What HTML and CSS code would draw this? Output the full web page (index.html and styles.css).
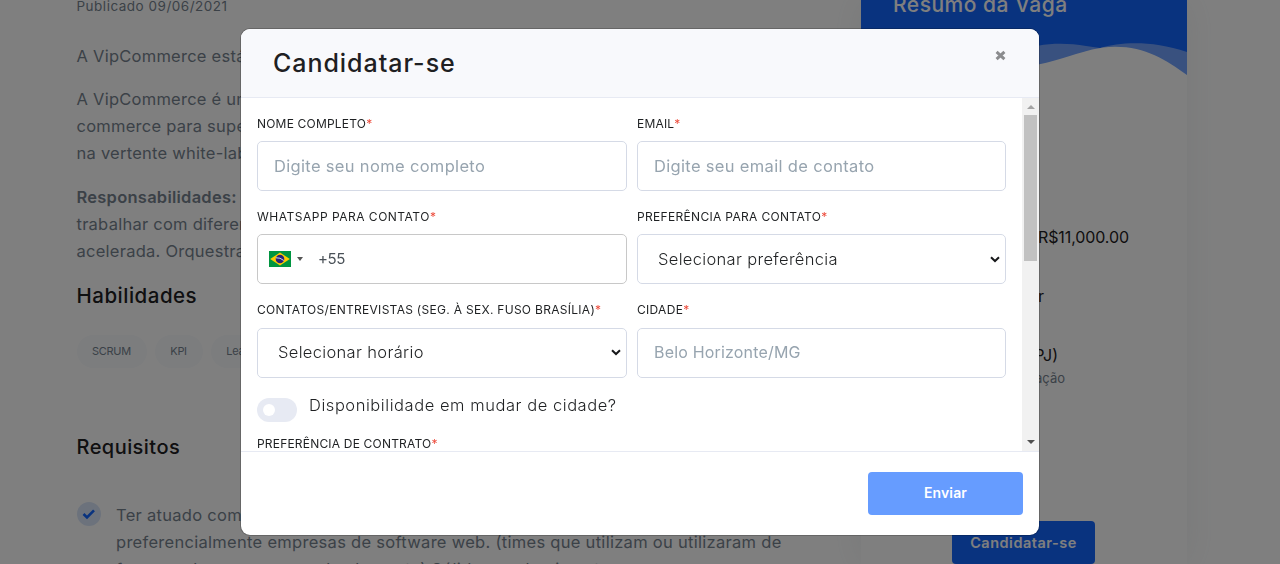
FILE: index.html
```html
<!DOCTYPE html>
<html lang="pt-BR">
<head>
<meta charset="utf-8">
<title>Candidatar-se</title>
<link rel="stylesheet" href="styles.css">
</head>
<body>
<div class="page">
  <main class="job">
    <p class="date">Publicado 09/06/2021</p>
    <p class="para">A VipCommerce está</p>
    <p class="para">A VipCommerce é um<br>commerce para super<br>na vertente white-label</p>
    <p class="para"><b>Responsabilidades:</b> A<br>trabalhar com diferentes<br>acelerada. Orquestrar</p>
    <h2 class="title skills">Habilidades</h2>
    <div class="tags"><span class="tag">SCRUM</span><span class="tag">KPI</span><span class="tag">Lean</span></div>
    <h2 class="title">Requisitos</h2>
    <div class="req">
      <span class="check"><svg width="14" height="12" viewBox="0 0 14 12"><path d="M1.5 6 5 9.5 12 2.3" fill="none" stroke="#1366ff" stroke-width="2.6"/></svg></span>
      <p class="req-text">Ter atuado como<br>preferencialmente empresas de software web. (times que utilizam ou utilizaram de<br>frameworks como scrum, kanban, etc) Sólidos conhecimentos</p>
    </div>
  </main>
  <aside class="summary">
    <h3 class="summary-title">Resumo da Vaga</h3>
    <svg class="wave" width="326" height="36" viewBox="0 0 326 36"><path d="M150 14C175 3 200 2 225 6L239 8C260 2 290 0 326 12V36H150Z" fill="#73a3ff"/><path d="M0 36V10C50 0 80 30 150 28 200 25 220 7 254 6.8 285 6.8 305 20 326 35V36Z" fill="#fff"/></svg>
    <div class="facts"><p class="pay">R$11,000.00</p><p class="level">Sênior</p><p class="contract">(PJ)</p><p class="note">Contratação</p></div>
    <button class="apply">Candidatar-se</button>
  </aside>
</div>
<div class="overlay">
  <section class="modal">
    <header class="modal-head"><h1 class="modal-title">Candidatar-se</h1>
      <svg class="close" width="11" height="11" viewBox="0 0 11 11"><path d="M1.6 1.9 9.4 9.1M9.4 1.9 1.6 9.1" stroke="#8b8c8e" stroke-width="3"/></svg>
    </header>
    <div class="modal-body">
      <form class="form">
        <div class="field"><label class="label tight">Nome completo<i>*</i></label><div class="input"><span class="ph">Digite seu nome completo</span></div></div>
        <div class="field"><label class="label tight">Email<i>*</i></label><div class="input"><span class="ph">Digite seu email de contato</span></div></div>
        <div class="field"><label class="label wide">WhatsApp para contato<i>*</i></label><div class="input phone">
          <svg class="flag" width="22" height="16" viewBox="0 0 22 16"><path d="M0 0h22v16H0z" fill="#009540"/><path d="M11 1.5 20.8 8 11 14.5 1.2 8Z" fill="#fecb00"/><circle cx="11" cy="8" r="4.3" fill="#2b2378"/><path d="M7 6.8Q11 6.3 14.8 9.5" fill="none" stroke="#fff" stroke-width=".8"/></svg>
          <span class="caret"></span><span class="code">+55</span></div></div>
        <div class="field"><label class="label">Preferência para contato<i>*</i></label><div class="input select"><span>Selecionar preferência</span><svg width="10" height="7" viewBox="0 0 10 7"><path d="M1 1.2 5 5 9 1.2" fill="none" stroke="#17181a" stroke-width="2"/></svg></div></div>
        <div class="field"><label class="label low">Contatos/Entrevistas (seg. à sex. fuso Brasília)<i>*</i></label><div class="input select"><span>Selecionar horário</span><svg width="10" height="7" viewBox="0 0 10 7"><path d="M1 1.2 5 5 9 1.2" fill="none" stroke="#17181a" stroke-width="2"/></svg></div></div>
        <div class="field"><label class="label low">Cidade<i>*</i></label><div class="input"><span class="ph city">Belo Horizonte/MG</span></div></div>
      </form>
      <div class="toggle-row"><span class="toggle"></span><span>Disponibilidade em mudar de cidade?</span></div>
      <label class="label tight">Preferência de contrato<i>*</i></label>
      <div class="scrollbar"><span class="arrow up"></span><span class="thumb"></span><span class="arrow down"></span></div>
    </div>
    <footer class="modal-foot"><button class="send">Enviar</button></footer>
  </section>
</div>
</body>
</html>
```

FILE: styles.css
```css
* { box-sizing: border-box; }
html, body { height: 564px; overflow: hidden; }
body { margin: 0; background: #fff; font-family: Inter, "Open Sans", sans-serif; font-size: 16px; line-height: 27px; color: #77838f; }
p, h1, h2, h3 { margin: 0; }
button { border: 0; font: inherit; }
i { font-style: normal; color: #ed4c3c; letter-spacing: 0; }
.page { display: flex; height: 564px; overflow: hidden; }
.job { width: 861px; padding: 0 0 0 76.5px; margin-top: -7px; flex: none; white-space: nowrap; font-size: 16.5px; letter-spacing: .25px; }
.date { font-size: 13.5px; letter-spacing: .5px; margin-bottom: 23px; }
.para { margin-bottom: 16.4px; }
.para b { font-weight: 600; letter-spacing: .25px; }
.title { font-size: 20px; font-weight: 500; line-height: 27px; color: #1e2022; letter-spacing: .45px; }
.skills { font-size: 20.5px; letter-spacing: .5px; margin-top: 17px; }
.tags { display: flex; gap: 8px; margin: 26px 0 66px; }
.tag { height: 33px; line-height: 33px; padding: 0 16px 0 15.5px; border-radius: 17px; background: #f8fafd; font-size: 11px; letter-spacing: -.3px; }
.req { display: flex; gap: 15.5px; margin-top: 41px; }
.req-text { letter-spacing: .29px; }
.check { width: 24px; height: 24px; border-radius: 50%; background: #d9e5f8; display: flex; align-items: center; justify-content: center; }
.summary { width: 326px; height: 564px; flex: none; box-shadow: 0 0 35px rgba(140,152,164,.13); display: flex; flex-direction: column; background: linear-gradient(#1366ff 0 74px, #fff 74px); }
.summary-title { font-size: 21px; font-weight: 500; letter-spacing: .5px; color: #fff; padding-left: 32px; margin-top: -9px; }
.wave { margin-top: 22px; display: block; flex: none; }
.facts { padding-left: 177px; color: #1e2022; white-space: nowrap; }
.pay { margin-top: 148px; letter-spacing: -.1px; }
.level { width: 6px; margin-top: 32px; display: flex; justify-content: flex-end; }
.contract { width: 20px; margin-top: 32px; display: flex; justify-content: flex-end; }
.note { width: 27px; font-size: 13px; line-height: 18px; color: #77838f; display: flex; justify-content: flex-end; }
.apply { width: 143px; height: 43px; flex: none; margin: 134px 0 0 91px; border-radius: 4px; background: #1366ff; color: #fff; font-size: 14.5px; font-weight: 600; letter-spacing: .5px; padding: 0 0 1px; }
.overlay { position: fixed; inset: 0; background: rgba(0,0,0,.5); padding: 28px 240px; }
.modal { width: 800px; height: 508px; border: 1px solid rgba(0,0,0,.2); border-radius: 10px; background: #fff; background-clip: padding-box; display: flex; flex-direction: column; overflow: hidden; }
.modal-head { height: 69px; background: #f8f9fc; border-bottom: 1px solid #e7eaf3; display: flex; justify-content: space-between; padding: 21px 33px 0 32px; }
.modal-title { font-size: 25px; font-weight: 450; line-height: 27px; letter-spacing: .96px; color: #1e2022; }
.modal-body { height: 353px; overflow: hidden; position: relative; padding: 14px 33px 0 16px; }
.form { display: grid; grid-template-columns: 370px 369px; column-gap: 10px; }
.field { height: 93.3px; }
.label { display: block; height: 29px; line-height: 23.6px; font-size: 12px; letter-spacing: .32px; color: #1e2022; text-transform: uppercase; white-space: nowrap; }
.low { line-height: 22px; letter-spacing: .29px; }
.tight { letter-spacing: .19px; }
.wide { letter-spacing: .5px; }
.input { height: 50px; border: 1px solid #d5dae6; border-radius: 5px; padding: 0 16px; display: flex; align-items: center; white-space: nowrap; font-size: 16.5px; letter-spacing: .33px; }
.ph { color: #97a4af; }
.city { font-size: 16px; letter-spacing: .18px; }
.phone { border-color: #c8c8c8; padding-left: 11px; }
.caret { border: 3px solid transparent; border-top: 4px solid #555; border-bottom: 0; margin: 0 15px 0 6px; }
.code { color: #495057; font-size: 15px; letter-spacing: -.4px; margin-top: -2px; }
.select { padding: 0 5px 0 20px; justify-content: space-between; color: #1e2022; font-weight: 350; }
.toggle-row { display: flex; gap: 12px; height: 40px; color: #1e2022; font-weight: 300; font-size: 16.5px; letter-spacing: .55px; }
.toggle { width: 40px; height: 24px; border-radius: 12px; background: #e7eaf3; padding: 6px; margin-top: 6px; }
.toggle::before { content: ""; display: block; width: 12px; height: 12px; border-radius: 50%; background: #fff; }
.scrollbar { position: absolute; right: 0; top: 0; width: 17px; height: 353px; background: #f1f1f1; display: flex; flex-direction: column; align-items: center; padding: 7px 0; }
.arrow { border: 4px solid transparent; }
.up { border-top: 0; border-bottom-color: #a3a3a3; }
.thumb { width: 13px; height: 146px; background: #c1c1c1; margin-top: 6px; }
.down { border-bottom: 0; border-top-color: #505050; margin-top: auto; }
.modal-foot { height: 84px; border-top: 1px solid #e7eaf3; padding: 20px 16px; display: flex; justify-content: flex-end; }
.send { width: 155px; height: 43px; border-radius: 4px; background: #669cff; color: #fff; font-size: 14px; font-weight: 600; letter-spacing: .1px; padding: 0 0 2px; }
```
